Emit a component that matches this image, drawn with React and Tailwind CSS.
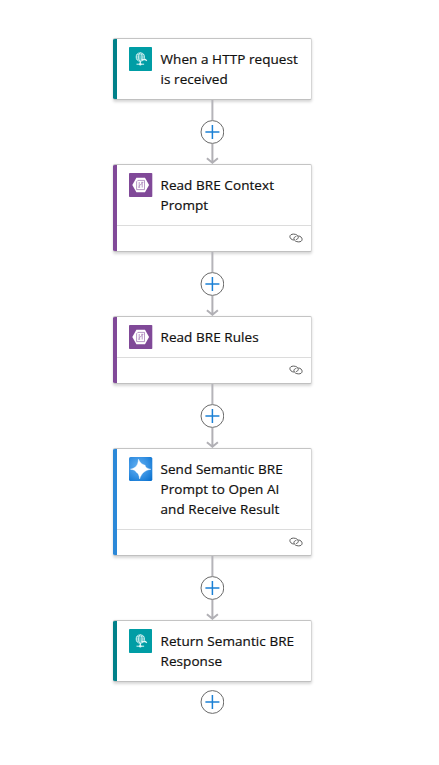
function HttpIcon() {
  return (
    <svg className="block h-6 w-6 shrink-0" viewBox="0 0 24 24" fill="none" stroke="#e2f7f7">
      <rect width="23" height="24" rx="0.8" fill="#009da5" stroke="none" />
      <circle cx="11.3" cy="10" r="4.1" strokeWidth="0.9" />
      <ellipse cx="11.3" cy="10" rx="1.8" ry="4.1" strokeWidth="0.8" />
      <path d="M7.2 10h8M7.8 7.9h7M7.8 12h6" strokeWidth="0.8" />
      <path d="M13 12.5h3.2l1.6 1.3M11.3 14v3" strokeWidth="1.3" />
      <path d="M7.5 17.2h7.6" strokeWidth="1" />
      <circle cx="11.3" cy="17.2" r="1.2" fill="#e2f7f7" stroke="none" />
    </svg>
  );
}

function RulesIcon() {
  return (
    <svg className="block h-6 w-6 shrink-0" viewBox="0 0 24 24" fill="none">
      <rect width="23.3" height="24" rx="0.8" fill="#804998" />
      <path d="M7.4 4.7H16l4.1 7.3-4.1 7.3H7.4L3.3 12z" fill="#fff" />
      <path d="M8.9 7.4h6.6v9.2H7.6V8.7z" stroke="#9a6dad" strokeWidth="0.7" />
      <path d="M10.2 9v5.2M9.2 14.2h2M13.2 9.3v5.2M12.2 9.3h2.2M10.5 12.5l2.5-2" stroke="#9a6dad" strokeWidth="0.7" />
    </svg>
  );
}

function SparkIcon() {
  return (
    <svg className="block h-6 w-6 shrink-0" viewBox="0 0 24 24">
      <defs>
        <radialGradient id="spark" cx="0.4" cy="0.4" r="0.8">
          <stop offset="0" stopColor="#64b1f2" />
          <stop offset="0.5" stopColor="#3a94e4" />
          <stop offset="1" stopColor="#0870ce" />
        </radialGradient>
      </defs>
      <rect width="23.3" height="24" rx="1.6" fill="url(#spark)" />
      <path d="M9.4 2.2C11 5.7 13.2 7.7 16.1 8.2 16.3 10.5 18.4 11.6 21.9 12.3 15.8 13.4 12.8 15.8 10.6 22 10.1 18.2 9.4 16.2 7.5 15.4 6.6 13.4 4.8 12.7 1.4 12.2 6.6 11 9 8.8 9.4 2.2z" fill="#fff" stroke="#fff" strokeWidth="0.4" />
    </svg>
  );
}

function LinkIcon() {
  return (
    <svg className="block h-3 w-[14px]" viewBox="0 0 14 12" fill="none" stroke="#555" strokeWidth="0.95">
      <path d="M4.9 8.1C2.5 7.8.9 6.3.9 4.7.9 3.1 2.3 2.1 4.5 2.1c2.6 0 4.8 1.4 4.8 3.2 0 1.2-1 2.1-2.4 2.3" />
      <path d="M9.3 3.9c2.4.3 3.8 1.8 3.8 3.4 0 1.6-1.4 2.6-3.4 2.6-2.6 0-4.8-1.4-4.8-3.2 0-1.2 1-2.1 2.4-2.3" />
    </svg>
  );
}

function AddButton() {
  return (
    <button className="block h-6 w-6" aria-label="Add step">
      <svg className="block" width="24" height="24" viewBox="0 0 24 24" fill="none">
        <circle cx="12.4" cy="12" r="11.4" fill="#fff" stroke="#6a6a6a" />
        <path d="M5.4 12h14M12.4 5v14" stroke="#1b80d5" strokeWidth="1.5" />
      </svg>
    </button>
  );
}

function Connector() {
  return (
    <div className="flex h-16 w-[198px] flex-col items-center">
      <svg className="block" width="14" height="20" viewBox="0 0 14 20" stroke="#b5b4b9" strokeWidth="2">
        <path d="M7.4 0v20" />
      </svg>
      <AddButton />
      <svg className="block" width="14" height="20" viewBox="0 0 14 20" fill="none" stroke="#b1b0b5" strokeWidth="2">
        <path d="M7.4 0v18.5M1.9 14.2l5.5 4.5 5.5-4.5" />
      </svg>
    </div>
  );
}

function Card({ bar, icon, lines, linked }) {
  return (
    <div className="flex w-[199px] overflow-hidden rounded-[2px] border-y border-r border-t-[#c4c4c4] border-r-[#d5d5d5] border-b-[#c0c0c0] bg-white shadow-[0_1.5px_3px_rgba(0,0,0,0.16)]">
      <div className={`-my-px w-[3.5px] shrink-0 ${bar}`} />
      <div className="flex-1">
        <div className="flex gap-[7.5px] pt-2 pl-[12.5px]">
          {icon}
          <div className="pt-0.5 pb-[10px] text-[13.5px] leading-5 font-medium tracking-[0.07px] whitespace-nowrap text-[#11100f] [-webkit-text-stroke:0.2px_#11100f]">
            {lines.map((text) => (
              <div key={text}>{text}</div>
            ))}
          </div>
        </div>
        {linked && (
          <div className="flex h-[26px] items-center justify-end border-t border-[#dcdcdc] pr-2 pb-0.5">
            <LinkIcon />
          </div>
        )}
      </div>
    </div>
  );
}

export default function App() {
  return (
    <main className="flex h-[765px] w-[439px] flex-col items-start bg-white pt-[38px] pl-[113px] font-['Open_Sans','Noto_Sans',sans-serif]">
      <div className="flex w-[199px] flex-col items-start">
        <Card bar="bg-[#008089]" icon={<HttpIcon />} lines={['When a HTTP request', 'is received']} />
        <Connector />
        <Card bar="bg-[#804998]" icon={<RulesIcon />} lines={['Read BRE Context', 'Prompt']} linked />
        <Connector />
        <Card bar="bg-[#804998]" icon={<RulesIcon />} lines={['Read BRE Rules']} linked />
        <Connector />
        <Card bar="bg-[#2b88d8]" icon={<SparkIcon />} lines={['Send Semantic BRE', 'Prompt to Open AI', 'and Receive Result']} linked />
        <Connector />
        <Card bar="bg-[#008089]" icon={<HttpIcon />} lines={['Return Semantic BRE', 'Response']} />
        <div className="flex w-[198px] justify-center pt-2">
          <AddButton />
        </div>
      </div>
    </main>
  );
}
